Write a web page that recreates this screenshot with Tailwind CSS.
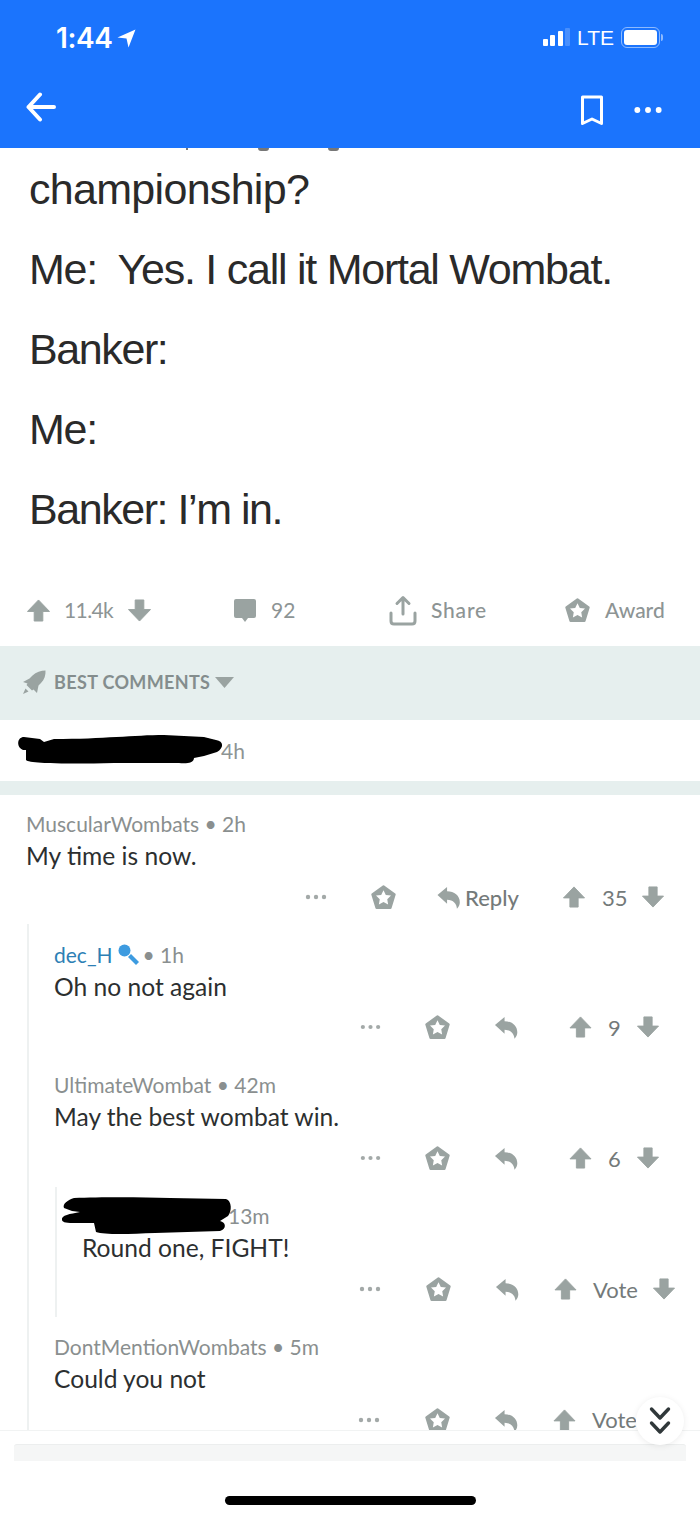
<!DOCTYPE html>
<html lang="en">
<head>
<meta charset="UTF-8" />
<title>Comments</title>
<script src="https://cdn.jsdelivr.net/npm/@tailwindcss/browser@4"></script>
</head>
<body class="bg-white">
<svg class="hidden" xmlns="http://www.w3.org/2000/svg">
  <symbol id="up" viewBox="0 0 24 24"><path d="M12 1 L23.5 13 H16.5 V23 H7.5 V13 H0.5 Z" fill="currentColor" stroke="currentColor" stroke-width="1" stroke-linejoin="round"/></symbol>
  <symbol id="down" viewBox="0 0 24 24"><path d="M12 23 L23.5 11 H16.5 V1 H7.5 V11 H0.5 Z" fill="currentColor" stroke="currentColor" stroke-width="1" stroke-linejoin="round"/></symbol>
  <symbol id="award" viewBox="0 0 26 26"><path fill="currentColor" d="M13 1.5 24.5 9.8 20.2 23.8H5.8L1.5 9.8Z" stroke="currentColor" stroke-width="2.4" stroke-linejoin="round"/><path fill="#fff" d="M13 5.5 15.4 10.4 20.8 11 16.9 14.8 17.8 20.2 13 17.6 8.2 20.2 9.1 14.8 5.2 11 10.6 10.4Z"/></symbol>
  <symbol id="reply" viewBox="0 0 24 24"><path fill="currentColor" d="M.5 9.5 10.5 1V5.5C18 5.5 23.8 10 23.8 17 23.8 19.6 22.8 22 20.8 23.8 20.6 18.5 17 14.5 10.5 14.3V18.5Z"/></symbol>
  <symbol id="dots" viewBox="0 0 22 6"><circle cx="3" cy="3" r="2.2" fill="currentColor"/><circle cx="11" cy="3" r="2.2" fill="currentColor"/><circle cx="19" cy="3" r="2.2" fill="currentColor"/></symbol>
</svg>

<div class="relative w-[700px] h-[1518px] overflow-hidden flex flex-col">

  <!-- Header -->
  <header class="h-[148px] shrink-0 bg-[#1b74fd] text-white px-[26px] flex flex-col">
    <div class="h-[72px] flex items-center justify-between pt-[2px]">
      <div class="flex items-center gap-[5px] pl-[30px] mt-[2px]">
        <span class="font-['Inter',sans-serif] text-[28px] font-semibold tracking-[-0.4px]">1:44</span>
        <svg class="w-[19px] h-[19px]" viewBox="0 0 19 19"><path d="M18.5 .5 11.5 18.5 9.5 9.5 .5 8.5Z" fill="white"/></svg>
      </div>
      <div class="flex items-center pr-[11px]">
        <div class="flex items-end gap-[2.5px] h-[18px]">
          <div class="w-[5px] h-[7px] bg-white rounded-[1px]"></div>
          <div class="w-[5px] h-[11px] bg-white rounded-[1px]"></div>
          <div class="w-[5px] h-[15px] bg-white rounded-[1px]"></div>
          <div class="w-[5px] h-[18px] bg-white/20 rounded-[1px]"></div>
        </div>
        <span class="ml-[7px] font-['Liberation_Sans',sans-serif] text-[21px] leading-none">LTE</span>
        <div class="ml-[7px] w-[39px] h-[21px] rounded-[6px] border border-white/50 p-[2px]">
          <div class="w-full h-full bg-white rounded-[3px]"></div>
        </div>
        <div class="ml-[1px] w-[2px] h-[7px] bg-white/50 rounded-r"></div>
      </div>
    </div>
    <div class="flex-1 flex items-center justify-between">
      <svg class="w-[30px] h-[30px] mb-[6px]" viewBox="0 0 30 30" fill="none" stroke="white" stroke-width="4" stroke-linecap="round" stroke-linejoin="round"><path d="M28 15H2.5M14 2.5 2.5 15 14 27.5"/></svg>
      <div class="flex items-center gap-[29px] pr-[11px]">
        <svg class="w-[24px] h-[31px]" viewBox="0 0 24 31" fill="none" stroke="white" stroke-width="3" stroke-linejoin="round"><path d="M2.5 2H21.5V28.5L12 24 2.5 28.5Z"/></svg>
        <svg class="w-[30px] h-[8px] text-white" viewBox="0 0 22 6"><use href="#dots"/></svg>
      </div>
    </div>
  </header>

  <!-- Post text -->
  <div class="relative shrink-0 pl-[29px] pt-[1px] font-['Liberation_Sans',sans-serif] text-[43px] leading-[80px] tracking-[-1.25px] text-[#2a2a2a]">
    <div class="absolute left-[186px] top-0 w-[2px] h-[2px] bg-[#777]"></div>
    <div class="absolute left-[258px] top-0 w-[11px] h-[3px] rounded-b-full bg-[#777]"></div>
    <div class="absolute left-[328px] top-0 w-[11px] h-[3px] rounded-b-full bg-[#777]"></div>
    <p class="tracking-[-0.7px]">championship?</p>
    <p>Me:&nbsp; Yes. I call it Mortal Wombat.</p>
    <p class="tracking-[-1.4px]">Banker:</p>
    <p>Me:</p>
    <p class="tracking-[-1.45px]">Banker: I’m in.</p>
  </div>

  <!-- Post actions -->
  <div class="h-[68px] mt-[29px] shrink-0 flex items-center pl-[27px] pb-[4px] text-[#8d9494] font-['Lato',sans-serif] text-[21px]">
    <svg class="w-[23px] h-[23px] text-[#9aa3a1]"><use href="#up"/></svg>
    <span class="ml-[14px] w-[53px] tracking-[-0.6px]">11.4k</span>
    <svg class="ml-[11px] w-[23px] h-[23px] text-[#9aa3a1]"><use href="#down"/></svg>
    <svg class="ml-[82px] w-[24px] h-[25px] text-[#9aa3a1]" viewBox="0 0 24 25"><path fill="currentColor" d="M3 1H21Q23 1 23 3V18Q23 20 21 20H15L12 24 9 20H3Q1 20 1 18V3Q1 1 3 1Z"/></svg>
    <span class="ml-[14px] w-[40px]">92</span>
    <svg class="ml-[78px] w-[28px] h-[31px] text-[#9aa3a1]" viewBox="0 0 28 31" fill="none" stroke="currentColor" stroke-width="3" stroke-linecap="round" stroke-linejoin="round"><path d="M14 19V3M8 8.5 14 2.5 20 8.5"/><path d="M2 18V26Q2 29 5 29H23Q26 29 26 26V18"/></svg>
    <span class="ml-[14px] w-[59px] font-medium tracking-[0.8px]">Share</span>
    <svg class="ml-[75px] w-[25px] h-[25px] text-[#9aa3a1]"><use href="#award"/></svg>
    <span class="ml-[15px] font-medium">Award</span>
  </div>

  <!-- Sort bar -->
  <div class="h-[74px] shrink-0 bg-[#e6efee] flex items-center pl-[22px] pb-[2px] text-[#848d8d] font-['Lato',sans-serif]">
    <svg class="w-[24px] h-[25px] text-[#9aa3a1]" viewBox="0 0 24 25"><path fill="currentColor" d="M23.5.5C23.8 5 22.5 9.5 19 13L16.5 15.5 15 23 11.5 19.5 10 20.5 4.5 15 5.5 13.5 1 12 7.5 8.5 10.5 5.5C14 2 19 .5 23.5.5ZM3.5 18.5 6.5 21.5 1 24Z"/></svg>
    <span class="ml-[8px] text-[18px] font-bold tracking-[0.35px]">BEST COMMENTS</span>
    <svg class="ml-[5px] w-[19px] h-[11px] text-[#9aa3a1]" viewBox="0 0 19 11"><path fill="currentColor" d="M0 0H19L9.5 11Z"/></svg>
  </div>

  <!-- Collapsed comment -->
  <div class="h-[61px] shrink-0 flex items-center pl-[221px] pt-[1px] font-['Lato',sans-serif] text-[21px] text-[#8d9494]">4h</div>
  <div class="h-[14px] shrink-0 bg-[#e6efee]"></div>

  <!-- Comment tree -->
  <div class="h-[635px] shrink-0 overflow-hidden pt-[13px] font-['Lato',sans-serif]">
    <div class="pl-[26px]">
      <div class="h-[32px] flex items-center text-[21px] text-[#8a8f8f]">MuscularWombats • 2h</div>
      <div class="h-[32px] flex items-center text-[24.6px] text-[#2c2f30]">My time is now.</div>
      <div class="mt-[5px] h-[40px] flex items-center text-[#747a7a] text-[22px]">
        <svg class="ml-[279px] w-[22px] h-[6px] text-[#a3a9a8]"><use href="#dots"/></svg>
        <svg class="ml-[44px] w-[25px] h-[25px] text-[#9aa3a1]"><use href="#award"/></svg>
        <svg class="ml-[41px] w-[23px] h-[23px] text-[#9aa3a1]"><use href="#reply"/></svg>
        <span class="ml-[5px] w-[53px] font-medium">Reply</span>
        <svg class="ml-[45px] w-[22px] h-[22px] text-[#9aa3a1]"><use href="#up"/></svg>
        <span class="ml-[17px] w-[24px]">35</span>
        <svg class="ml-[16px] w-[22px] h-[22px] text-[#9aa3a1]"><use href="#down"/></svg>
      </div>

      <div class="mt-[7px] ml-[1px] border-l-2 border-[#eef1f1] pl-[25px] pt-[15px]">
        <div class="h-[32px] flex items-center text-[21px] text-[#8a8f8f]">
          <span class="text-[#2d7fb5]">dec_H</span>
          <svg class="ml-[5px] w-[22px] h-[22px] text-[#3d9be0]" viewBox="0 0 22 22"><circle cx="6.5" cy="6.5" r="6" fill="currentColor"/><path d="M10 13 13 10 21 18 18 21Z" fill="currentColor"/></svg>
          <span class="ml-[3px]">• 1h</span>
        </div>
        <div class="h-[32px] flex items-center text-[24.6px] text-[#2c2f30]">Oh no not again</div>
        <div class="mt-[4px] h-[40px] flex items-center text-[#747a7a] text-[22px]">
          <svg class="ml-[306px] w-[21px] h-[6px] text-[#a3a9a8]"><use href="#dots"/></svg>
          <svg class="ml-[44px] w-[25px] h-[25px] text-[#9aa3a1]"><use href="#award"/></svg>
          <svg class="ml-[44px] w-[24px] h-[23px] text-[#9aa3a1]"><use href="#reply"/></svg>
          <svg class="ml-[51px] w-[23px] h-[22px] text-[#9aa3a1]"><use href="#up"/></svg>
          <span class="ml-[16px] w-[12px]">9</span>
          <svg class="ml-[17px] w-[22px] h-[22px] text-[#9aa3a1]"><use href="#down"/></svg>
        </div>

        <div class="mt-[22px] h-[32px] flex items-center text-[21px] text-[#8a8f8f]">UltimateWombat • 42m</div>
        <div class="h-[32px] flex items-center text-[24.6px] text-[#2c2f30]">May the best wombat win.</div>
        <div class="mt-[5px] h-[40px] flex items-center text-[#747a7a] text-[22px]">
          <svg class="ml-[306px] w-[21px] h-[6px] text-[#a3a9a8]"><use href="#dots"/></svg>
          <svg class="ml-[44px] w-[25px] h-[25px] text-[#9aa3a1]"><use href="#award"/></svg>
          <svg class="ml-[44px] w-[24px] h-[23px] text-[#9aa3a1]"><use href="#reply"/></svg>
          <svg class="ml-[51px] w-[23px] h-[22px] text-[#9aa3a1]"><use href="#up"/></svg>
          <span class="ml-[16px] w-[12px]">6</span>
          <svg class="ml-[17px] w-[22px] h-[22px] text-[#9aa3a1]"><use href="#down"/></svg>
        </div>

        <div class="mt-[9px] ml-[1px] border-l-2 border-[#eef1f1] pl-[25px] pt-[13px] pb-[8px]">
          <div class="h-[32px] flex items-center pl-[146px] text-[21px] text-[#8a8f8f]">13m</div>
          <div class="h-[32px] flex items-center text-[24.6px] text-[#2c2f30]">Round one, FIGHT!</div>
          <div class="mt-[5px] h-[40px] flex items-center text-[#747a7a] text-[22px]">
            <svg class="ml-[277px] w-[22px] h-[6px] text-[#a3a9a8]"><use href="#dots"/></svg>
            <svg class="ml-[45px] w-[25px] h-[25px] text-[#9aa3a1]"><use href="#award"/></svg>
            <svg class="ml-[44px] w-[24px] h-[23px] text-[#9aa3a1]"><use href="#reply"/></svg>
            <svg class="ml-[35px] w-[23px] h-[22px] text-[#9aa3a1]"><use href="#up"/></svg>
            <span class="ml-[16px] w-[44px]">Vote</span>
            <svg class="ml-[15px] w-[24px] h-[22px] text-[#9aa3a1]"><use href="#down"/></svg>
          </div>
        </div>

        <div class="mt-[14px] h-[32px] flex items-center text-[21px] text-[#8a8f8f]">DontMentionWombats • 5m</div>
        <div class="h-[32px] flex items-center text-[24.6px] text-[#2c2f30]">Could you not</div>
        <div class="mt-[5px] h-[40px] flex items-center text-[#747a7a] text-[22px]">
          <svg class="ml-[304px] w-[22px] h-[6px] text-[#a3a9a8]"><use href="#dots"/></svg>
          <svg class="ml-[45px] w-[25px] h-[25px] text-[#9aa3a1]"><use href="#award"/></svg>
          <svg class="ml-[44px] w-[24px] h-[23px] text-[#9aa3a1]"><use href="#reply"/></svg>
          <svg class="ml-[35px] w-[23px] h-[22px] text-[#9aa3a1]"><use href="#up"/></svg>
          <span class="ml-[16px] w-[44px] leading-none">Vote</span>
        </div>
      </div>
    </div>
  </div>

  <!-- Bottom bar -->
  <div class="flex-1 border-t border-[#f1f3f3] bg-white pt-[13px] px-[14px] flex flex-col">
    <div class="h-[17px] bg-[#f5f6f6] border-t border-[#eceeee] rounded-t-[3px]"></div>
    <div class="mt-[35px] mx-auto w-[251px] h-[9px] bg-black rounded-full"></div>
  </div>

  <!-- Scroll button -->
  <div class="absolute left-[636px] top-[1397px] w-[48px] h-[48px] rounded-full bg-white shadow-[0_1px_6px_rgba(0,0,0,0.08)] flex items-center justify-center">
    <svg class="w-[22px] h-[30px]" viewBox="0 0 22 30" fill="none" stroke="#30383a" stroke-width="3.4" stroke-linecap="round" stroke-linejoin="round"><path d="M2.5 3 11 12 19.5 3M2.5 17 11 26 19.5 17"/></svg>
  </div>

  <!-- Scribbled-out names -->
  <svg class="absolute left-[14px] top-[733px] w-[212px] h-[34px]" viewBox="0 0 212 34"><path fill="#000" d="M10 4 C3 4 2 14 9 17 L12 17 L12 27 C15 31 60 31 100 30 L165 30 C172 31 180 30 180 25 L190 23 L203 19 C210 15 210 8 202 7 L190 4 L150 2 C120 2 90 6 40 6 L30 9 L26 6Z"/></svg>
  <svg class="absolute left-[60px] top-[1196px] w-[172px] h-[40px]" viewBox="0 0 172 40"><path fill="#000" d="M14 2 C8 4 2 8 4 12 L12 15 L20 16 C10 18 1 19 2 24 C3 28 12 27 34 27 L36 36 C45 39 70 38 95 37 L160 35 C167 33 166 26 160 25 L168 20 C172 15 172 5 166 3 L110 2 C80 1 40 1 14 2Z"/></svg>
</div>
</body>
</html>
